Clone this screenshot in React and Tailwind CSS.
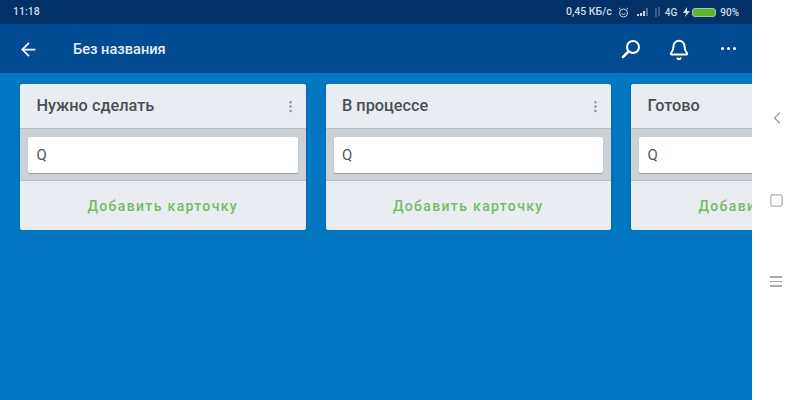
import { ArrowLeft, Bell, ChevronLeft, MoreVertical, Square } from "lucide-react";

const lists = ["Нужно сделать", "В процессе", "Готово"];

function StatusBar() {
  return (
    <div className="flex h-[24px] items-center justify-between bg-[#023167] pl-[13px] pr-[13px] text-[10px] font-medium text-[#d3dde9]">
      <span className="text-[10.5px]">11:18</span>
      <div className="flex items-center">
        <span className="text-[10.5px]">0,45 КБ/с</span>
        <svg className="ml-[6px]" width="11" height="11" viewBox="0 0 11 11" fill="none" stroke="#cdd8e6" strokeWidth="1">
          <circle cx="5.5" cy="6" r="4" />
          <path d="M1 2l1.500-1M10 2L8.500 1M3.700 6.500l1.800 1 1.800-1" />
        </svg>
        <svg className="ml-[8px]" width="12" height="8" viewBox="0 0 12 8" fill="#cdd8e6">
          <rect x="0" y="6" width="2" height="2" />
          <rect x="3" y="5" width="2" height="3" />
          <rect x="6" y="3" width="2" height="5" />
          <rect x="9" y="0" width="2" height="8" fill="#54739a" />
        </svg>
        <svg className="ml-[5px]" width="7" height="10" viewBox="0 0 7 10" stroke="#6f8bac" fill="none">
          <path d="M2 10V1M5 0v9" />
        </svg>
        <span className="ml-[4px] text-[10px]">4G</span>
        <svg className="ml-[6px]" width="7" height="10" viewBox="0 0 7 10" fill="#d3dde9">
          <path d="M4 0L0 6h3l-1 4 5-6H4z" />
        </svg>
        <div className="ml-[2px] h-[9px] w-[24px] rounded-[3px] border border-[#a8c6a0] bg-[#5cb531]" />
        <span className="ml-[4px] text-[10px]">90%</span>
      </div>
    </div>
  );
}

function AppBar() {
  return (
    <div className="flex h-[49px] items-center bg-[#024a91] pt-[2px] text-white">
      <ArrowLeft className="ml-[18px]" size={21} strokeWidth={2} />
      <span className="ml-[34px] text-[14.6px] font-medium text-[#e6eef6]">Без названия</span>
      <div className="ml-auto flex items-center">
        <svg className="-mt-[2px]" width="22" height="22" viewBox="0 0 22 22" fill="none" stroke="white" strokeWidth="2" strokeLinecap="round">
          <circle cx="13" cy="9" r="6" />
          <path d="M8.500 13.500L3 19" strokeWidth="2.500" />
        </svg>
        <Bell className="ml-[26px]" size={22} strokeWidth={2.1} />
        <div className="ml-[31px] mr-[16px] -mt-[2px] flex gap-[3px]">
          <span className="h-[3px] w-[3px] rounded-full bg-white" />
          <span className="h-[3px] w-[3px] rounded-full bg-white" />
          <span className="h-[3px] w-[3px] rounded-full bg-white" />
        </div>
      </div>
    </div>
  );
}

function ListCard({ title }) {
  return (
    <div className="w-[285.5px] shrink-0 overflow-hidden rounded-[2px] bg-[#e9edf2] shadow-[0_1px_2px_rgba(0,40,90,0.4)]">
      <div className="flex h-[44px] items-center justify-between pl-[16.5px] pr-[8px]">
        <span className="text-[16.3px] font-medium text-[#4a4d52]">{title}</span>
        <MoreVertical size={15} className="text-[#8d9196]" />
      </div>
      <div className="border-y border-[#b9bec4] bg-[#ccd1d6] px-[8px] pt-[8px] pb-[7px]">
        <div className="flex h-[36px] items-center rounded-[2px] bg-white pl-[8.5px] text-[15px] text-[#55585c] shadow-[0_1px_1px_rgba(0,0,0,0.25)]">
          Q
        </div>
      </div>
      <div className="flex h-[49px] items-center justify-center pt-[2px] text-[14px] font-medium tracking-[1.35px] text-[#75bb63]">
        Добавить карточку
      </div>
    </div>
  );
}

export default function App() {
  return (
    <div className="flex h-[400px] w-[800px] overflow-hidden bg-white font-['Roboto',sans-serif]">
      <div className="flex w-[752px] shrink-0 flex-col overflow-hidden bg-[#0276c1]">
        <StatusBar />
        <AppBar />
        <div className="flex items-start gap-[20px] overflow-hidden pl-[20px] pt-[11px]">
          {lists.map((title) => (
            <ListCard key={title} title={title} />
          ))}
        </div>
      </div>
      <div className="flex flex-1 flex-col items-center pt-[108px] text-[#9a9da1]">
        <ChevronLeft className="ml-[2px]" size={20} strokeWidth={1.5} />
        <Square className="mt-[65px]" size={15} strokeWidth={1.6} />
        <div className="mt-[68px] flex w-[12px] flex-col gap-[3px]">
          <span className="h-[1.5px] bg-[#a5a8ac]" />
          <span className="h-[1.5px] bg-[#a5a8ac]" />
          <span className="h-[1.5px] bg-[#a5a8ac]" />
        </div>
      </div>
    </div>
  );
}
